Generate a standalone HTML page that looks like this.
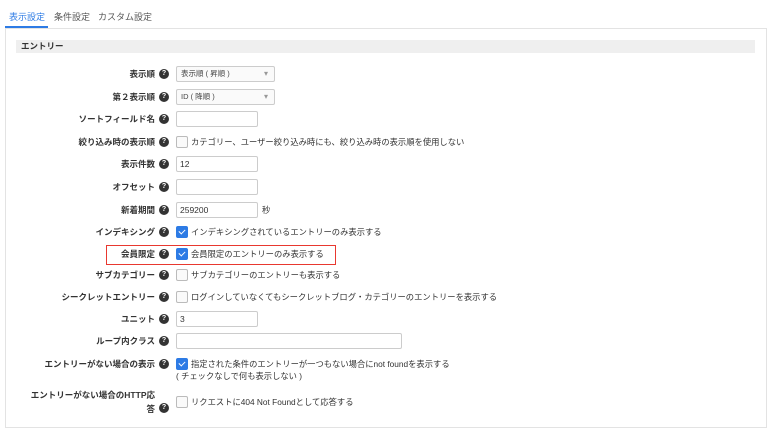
<!DOCTYPE html>
<html><head><meta charset="utf-8"><style>
body{margin:0;width:775px;height:409px;overflow:hidden;background:#fff;font-family:"Liberation Sans","Noto Sans CJK JP",sans-serif;font-size:8.3px;color:#333;position:relative}
.a{position:absolute}
.tab{top:10px;font-size:9px;color:#555}
.panel{left:5px;top:28px;width:762px;height:400px;border:1px solid #e3e3e3;box-sizing:border-box}
.hdr{left:16px;top:40px;width:739px;height:13px;background:#efefef;font-weight:bold;font-size:8.5px;line-height:13px;padding-left:5px;box-sizing:border-box}
.lbl{right:620px;font-weight:bold;font-size:8.5px;text-align:right;white-space:nowrap;line-height:12px}
.q{left:159px;width:10px;height:10px;border-radius:50%;background:#333;color:#fff;font-size:7px;font-weight:bold;text-align:center;line-height:10px}
.in{left:176px;width:82px;height:16px;border:1px solid #ccc;border-radius:2px;box-sizing:border-box;font-size:8.5px;line-height:14px;padding-left:3px;background:#fff}
.sel{left:176px;width:99px;height:16px;border:1px solid #ccc;border-radius:2px;box-sizing:border-box;font-size:7.5px;line-height:14px;padding-left:4px;background:#fafafa;color:#444}
.sel:after{content:"▾";position:absolute;right:6px;top:0;color:#999;font-size:8px}
.cb{left:176px;width:10px;height:10px;border:1px solid #bbb;border-radius:2px;background:#fafafa}
.cb.on{background:#2d7be5;border-color:#2d7be5}
.cb.on:after{content:"";position:absolute;left:3px;top:1px;width:3px;height:5px;border:solid #fff;border-width:0 1.5px 1.5px 0;transform:rotate(45deg)}
.t{left:191px;white-space:nowrap;line-height:12px}
</style></head><body>
<div class="a tab" style="left:9px;color:#2d7be5">表示設定</div>
<div class="a" style="left:5px;top:26px;width:43px;height:2px;background:#2d7be5"></div>
<div class="a tab" style="left:54px">条件設定</div>
<div class="a tab" style="left:98px">カスタム設定</div>
<div class="a panel"></div>
<div class="a hdr">エントリー</div>

<div class="a lbl" style="top:68px">表示順</div><div class="a q" style="top:69px">?</div><div class="a sel" style="top:66px">表示順 ( 昇順 )</div>
<div class="a lbl" style="top:91px">第２表示順</div><div class="a q" style="top:92px">?</div><div class="a sel" style="top:89px">ID ( 降順 )</div>
<div class="a lbl" style="top:113px">ソートフィールド名</div><div class="a q" style="top:114px">?</div><div class="a in" style="top:111px"></div>
<div class="a lbl" style="top:136px">絞り込み時の表示順</div><div class="a q" style="top:137px">?</div><div class="a cb" style="top:136px"></div><div class="a t" style="top:136px">カテゴリー、ユーザー絞り込み時にも、絞り込み時の表示順を使用しない</div>
<div class="a lbl" style="top:158px">表示件数</div><div class="a q" style="top:159px">?</div><div class="a in" style="top:156px">12</div>
<div class="a lbl" style="top:181px">オフセット</div><div class="a q" style="top:182px">?</div><div class="a in" style="top:179px"></div>
<div class="a lbl" style="top:204px">新着期間</div><div class="a q" style="top:205px">?</div><div class="a in" style="top:202px">259200</div><div class="a t" style="left:262px;top:204px">秒</div>
<div class="a lbl" style="top:226px">インデキシング</div><div class="a q" style="top:227px">?</div><div class="a cb on" style="top:226px"></div><div class="a t" style="top:226px">インデキシングされているエントリーのみ表示する</div>
<div class="a" style="left:106px;top:245px;width:230px;height:20px;border:1.5px solid #e8382f;box-sizing:border-box"></div>
<div class="a lbl" style="top:248px">会員限定</div><div class="a q" style="top:249px">?</div><div class="a cb on" style="top:248px"></div><div class="a t" style="top:248px">会員限定のエントリーのみ表示する</div>
<div class="a lbl" style="top:269px">サブカテゴリー</div><div class="a q" style="top:270px">?</div><div class="a cb" style="top:269px"></div><div class="a t" style="top:269px">サブカテゴリーのエントリーも表示する</div>
<div class="a lbl" style="top:291px">シークレットエントリー</div><div class="a q" style="top:292px">?</div><div class="a cb" style="top:291px"></div><div class="a t" style="top:291px">ログインしていなくてもシークレットブログ・カテゴリーのエントリーを表示する</div>
<div class="a lbl" style="top:313px">ユニット</div><div class="a q" style="top:314px">?</div><div class="a in" style="top:311px">3</div>
<div class="a lbl" style="top:335px">ループ内クラス</div><div class="a q" style="top:336px">?</div><div class="a in" style="top:333px;width:226px"></div>
<div class="a lbl" style="top:358px">エントリーがない場合の表示</div><div class="a q" style="top:359px">?</div><div class="a cb on" style="top:358px"></div><div class="a t" style="top:358px">指定された条件のエントリーが一つもない場合にnot foundを表示する</div>
<div class="a t" style="left:176px;top:370px">( チェックなしで何も表示しない )</div>
<div class="a lbl" style="top:389px">エントリーがない場合のHTTP応</div>
<div class="a lbl" style="top:403px">答</div><div class="a q" style="top:403px">?</div><div class="a cb" style="top:396px"></div><div class="a t" style="top:396px">リクエストに404 Not Foundとして応答する</div>
</body></html>
